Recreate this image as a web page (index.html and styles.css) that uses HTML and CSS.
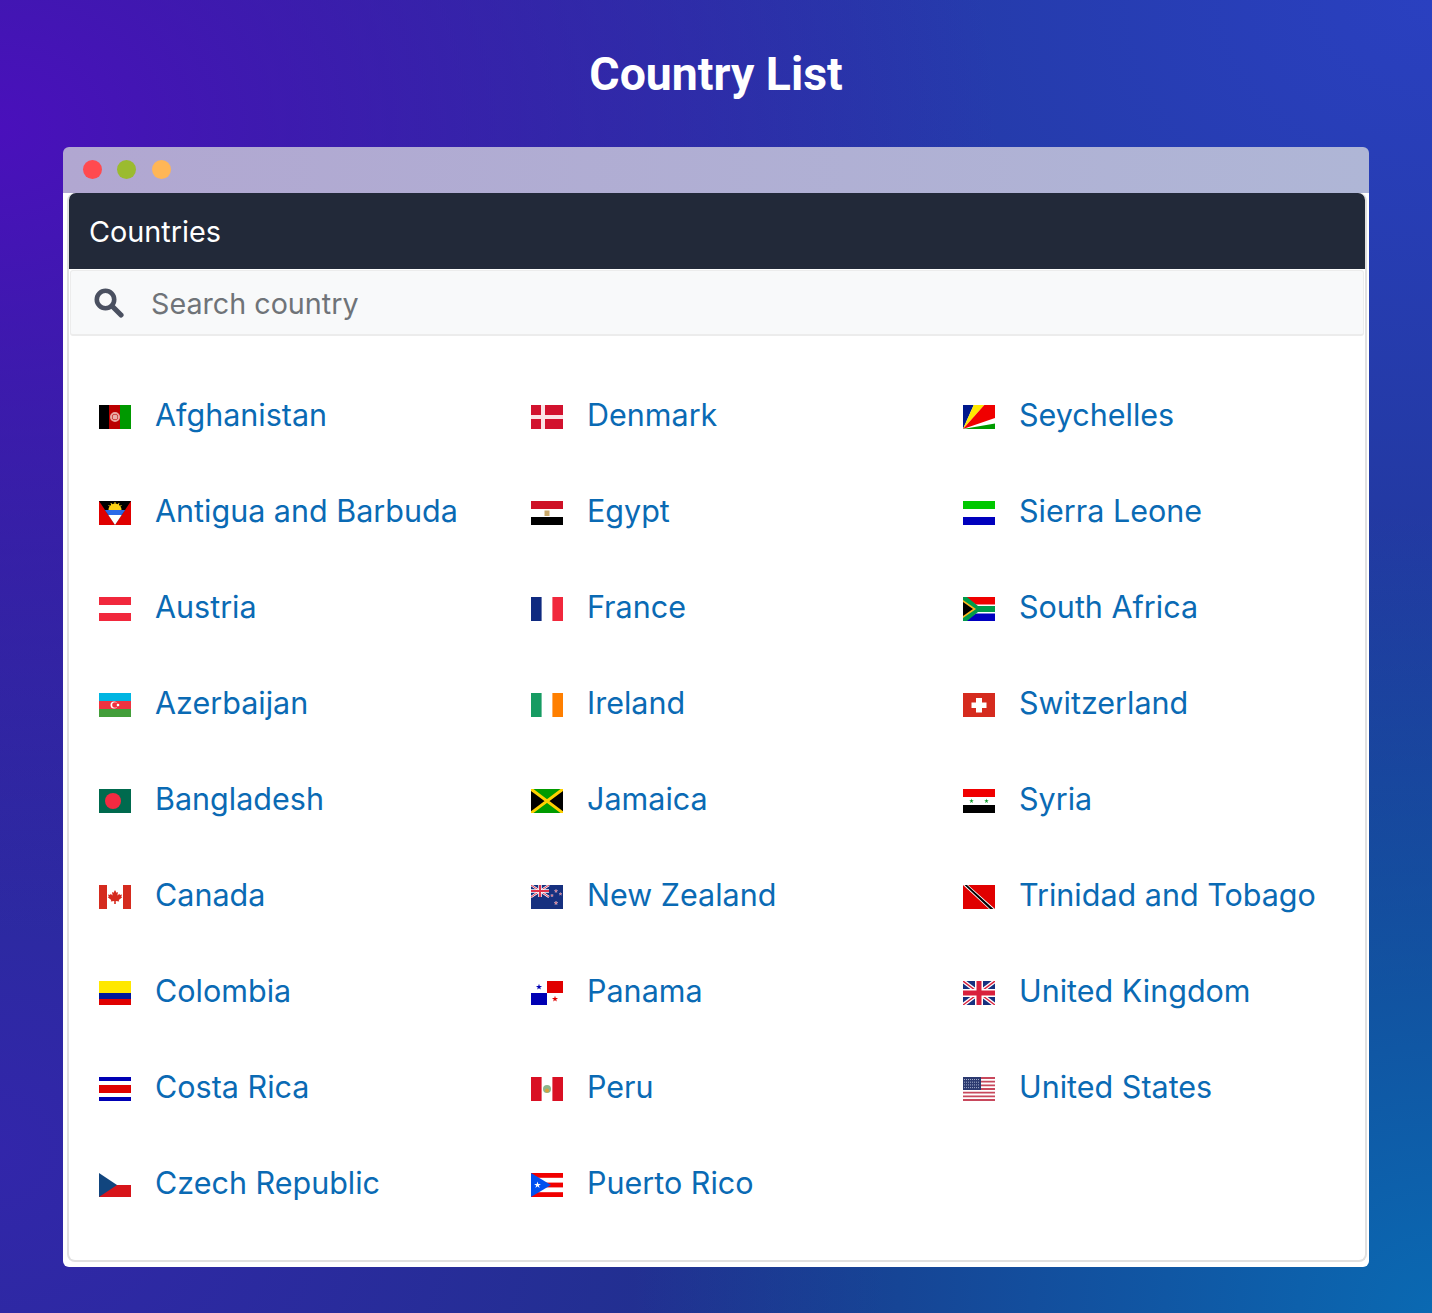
FILE: index.html
```html
<!DOCTYPE html>
<html lang="en">
<head>
<meta charset="utf-8">
<title>Country List</title>
<link rel="stylesheet" href="styles.css">
</head>
<body>
<svg class="defs" aria-hidden="true">
  <defs>
    <polygon id="star" points="0,-1 .225,-.31 .95,-.31 .36,.12 .59,.81 0,.38 -.59,.81 -.36,.12 -.95,-.31 -.225,-.31"/>
    <symbol id="af" viewBox="0 0 32 24"><rect width="10" height="24"/><rect x="10" width="11" height="24" fill="#b00"/><rect x="21" width="11" height="24" fill="#090"/><circle cx="16" cy="12" r="4" fill="none" stroke="#e9a8a0" stroke-width="2"/><circle cx="16" cy="12" r="2.500" fill="#e8b0aa"/></symbol>
    <symbol id="ag" viewBox="0 0 32 24"><rect width="32" height="24" fill="#e00000"/><polygon points="0,0 32,0 16,24"/><polygon points="5.800,9 26.200,9 22.700,14 9.300,14" fill="#2a6ae8"/><polygon points="9.300,14 22.700,14 16,24" fill="#fff"/><path d="M9.500 9a6.500 6.500 0 0 1 13 0z" fill="#fcd116"/><path d="M16 1v3M12 2l1 3M20 2l-1 3M9.500 4l2 2M22.500 4l-2 2" stroke="#fcd116" stroke-width="1"/></symbol>
    <symbol id="at" viewBox="0 0 32 24"><rect width="32" height="24" fill="#fff"/><rect width="32" height="8" fill="#f1283c"/><rect y="16" width="32" height="8" fill="#f1283c"/></symbol>
    <symbol id="az" viewBox="0 0 32 24"><rect width="32" height="8" fill="#00b5e2"/><rect y="8" width="32" height="8" fill="#ef3340"/><rect y="16" width="32" height="8" fill="#439e3a"/><circle cx="15" cy="12" r="3.500" fill="#fff"/><circle cx="16" cy="12" r="2.800" fill="#ef3340"/><circle cx="19" cy="12" r="1.300" fill="#fff"/></symbol>
    <symbol id="bd" viewBox="0 0 32 24"><rect width="32" height="24" fill="#006a4e"/><circle cx="14" cy="12" r="8" fill="#f42a41"/></symbol>
    <symbol id="ca" viewBox="0 0 32 24"><rect width="32" height="24" fill="#fff"/><rect width="8" height="24" fill="#d52b1e"/><rect x="24" width="8" height="24" fill="#d52b1e"/><path d="M16 5l1.500 2.800 1.500-.8-.6 3.500 2-1.800.5 1.300 2.100-.4-.7 2.200.9.500-3.400 2.800.4 1.300-3.400-.5v3h-1.600v-3l-3.400.5.400-1.300-3.400-2.800.9-.5-.7-2.200 2.100.4.500-1.300 2 1.800L13 7l1.500.8z" fill="#d52b1e"/></symbol>
    <symbol id="co" viewBox="0 0 32 24"><rect width="32" height="12" fill="#ffe800"/><rect y="12" width="32" height="6" fill="#00189b"/><rect y="18" width="32" height="6" fill="#e00000"/></symbol>
    <symbol id="cr" viewBox="0 0 32 24"><rect width="32" height="24" fill="#fff"/><rect width="32" height="4" fill="#0000b4"/><rect y="8" width="32" height="8" fill="#e00000"/><rect y="20" width="32" height="4" fill="#0000b4"/></symbol>
    <symbol id="cz" viewBox="0 0 32 24"><rect width="32" height="12" fill="#fff"/><rect y="12" width="32" height="12" fill="#d7141a"/><polygon points="0,0 18,12 0,24" fill="#11457e"/></symbol>
    <symbol id="dk" viewBox="0 0 32 24"><rect width="32" height="24" fill="#d2122e"/><rect x="10" width="4" height="24" fill="#fbe3e6"/><rect y="10" width="32" height="4" fill="#fbe3e6"/></symbol>
    <symbol id="eg" viewBox="0 0 32 24"><rect width="32" height="8" fill="#ce1126"/><rect y="8" width="32" height="8" fill="#fff"/><rect y="16" width="32" height="8"/><rect x="13.500" y="9.500" width="5" height="5.500" fill="#c9a86a"/></symbol>
    <symbol id="fr" viewBox="0 0 32 24"><rect width="32" height="24" fill="#fff"/><rect width="10.600" height="24" fill="#0f2a80"/><rect x="21.400" width="10.600" height="24" fill="#f1283c"/></symbol>
    <symbol id="ie" viewBox="0 0 32 24"><rect width="32" height="24" fill="#fff"/><rect width="10.600" height="24" fill="#169b62"/><rect x="21.400" width="10.600" height="24" fill="#ff7f00"/></symbol>
    <symbol id="jm" viewBox="0 0 32 24"><rect width="32" height="24" fill="#009b00"/><polygon points="0,0 16,12 0,24"/><polygon points="32,0 16,12 32,24"/><path d="M0 0l32 24M32 0L0 24" stroke="#fed100" stroke-width="3"/></symbol>
    <symbol id="nz" viewBox="0 0 32 24"><rect width="32" height="24" fill="#16307f"/><path d="M0 0l18 12M18 0L0 12" stroke="#fff" stroke-width="2.200"/><path d="M0 0l18 12M18 0L0 12" stroke="#e0334c" stroke-width="1"/><path d="M9 0v12M0 6h18" stroke="#fff" stroke-width="3.500"/><path d="M9 0v12M0 6h18" stroke="#e0334c" stroke-width="2"/><use href="#star" transform="translate(25,6) scale(1.700)" fill="#f04058" stroke="#fff" stroke-width=".2"/><use href="#star" transform="translate(21,10.500) scale(1.500)" fill="#f04058" stroke="#fff" stroke-width=".2"/><use href="#star" transform="translate(29.500,9) scale(1.500)" fill="#f04058" stroke="#fff" stroke-width=".2"/><use href="#star" transform="translate(25,18) scale(1.900)" fill="#f04058" stroke="#fff" stroke-width=".2"/></symbol>
    <symbol id="pa" viewBox="0 0 32 24"><rect width="32" height="24" fill="#fff"/><rect x="16" width="16" height="12" fill="#e00000"/><rect y="12" width="16" height="12" fill="#0000b4"/><use href="#star" transform="translate(8,6) scale(3.200)" fill="#0000b4"/><use href="#star" transform="translate(24,18) scale(3.200)" fill="#e00000"/></symbol>
    <symbol id="pe" viewBox="0 0 32 24"><rect width="32" height="24" fill="#fff"/><rect width="10.600" height="24" fill="#d91023"/><rect x="21.400" width="10.600" height="24" fill="#d91023"/><circle cx="16" cy="12" r="4" fill="#8db58c"/><circle cx="16" cy="13.500" r="2" fill="#d6a43a"/></symbol>
    <symbol id="pr" viewBox="0 0 32 24"><rect width="32" height="24" fill="#fff"/><rect width="32" height="4.800" fill="#f00000"/><rect y="9.600" width="32" height="4.800" fill="#f00000"/><rect y="19.200" width="32" height="4.800" fill="#f00000"/><polygon points="0,0 20,12 0,24" fill="#0050f0"/><use href="#star" transform="translate(6.500,12) scale(3.600)" fill="#fff"/></symbol>
    <symbol id="sc" viewBox="0 0 32 24"><rect width="32" height="24" fill="#fff"/><polygon points="0,24 0,0 10.700,0" fill="#00188c"/><polygon points="0,24 10.700,0 21.300,0" fill="#ffe800"/><polygon points="0,24 21.300,0 32,0 32,13" fill="#f00000"/><polygon points="0,24 32,18.500 32,24" fill="#009b00"/></symbol>
    <symbol id="sl" viewBox="0 0 32 24"><rect width="32" height="8" fill="#00c800"/><rect y="8" width="32" height="8" fill="#fff"/><rect y="16" width="32" height="8" fill="#0000bd"/></symbol>
    <symbol id="za" viewBox="0 0 32 24"><rect width="32" height="12" fill="#f00000"/><rect y="12" width="32" height="12" fill="#0000c0"/><polygon points="0,0 13,7.500 32,7.500 32,16.500 13,16.500 0,24" fill="#fff"/><polygon points="0,0 4,0 15,9 32,9 32,15 15,15 4,24 0,24" fill="#009b4a"/><polygon points="0,3 13,12 0,21" fill="#ffb81c"/><polygon points="0,5 10,12 0,19"/></symbol>
    <symbol id="ch" viewBox="0 0 32 24"><rect width="32" height="24" fill="#d52b1e"/><rect x="13" y="5" width="6" height="14.500" fill="#fff"/><rect x="8.500" y="9.500" width="15" height="5.500" fill="#fff"/></symbol>
    <symbol id="sy" viewBox="0 0 32 24"><rect width="32" height="8" fill="#f00000"/><rect y="8" width="32" height="8" fill="#fff"/><rect y="16" width="32" height="8"/><use href="#star" transform="translate(8.500,12) scale(2.400)" fill="#0c9b28"/><use href="#star" transform="translate(23.500,12) scale(2.400)" fill="#0c9b28"/></symbol>
    <symbol id="tt" viewBox="0 0 32 24"><rect width="32" height="24" fill="#e00000"/><polygon points="0,0 5,0 32,24 26,24" fill="#fff"/><polygon points="1.500,0 4,0 30.500,24 27,24" fill="#000"/></symbol>
    <symbol id="gb" viewBox="0 0 32 24"><rect width="32" height="24" fill="#16307f"/><path d="M0 0l32 24M32 0L0 24" stroke="#fff" stroke-width="4"/><path d="M0 0l32 24M32 0L0 24" stroke="#d9203c" stroke-width="1.400"/><path d="M16 0v24M0 12h32" stroke="#fff" stroke-width="8"/><path d="M16 0v24M0 12h32" stroke="#d9203c" stroke-width="5"/></symbol>
    <symbol id="us" viewBox="0 0 32 24"><rect width="32" height="24" fill="#fff"/><path d="M0 1h32M0 4.700h32M0 8.400h32M0 12h32M0 15.700h32M0 19.400h32M0 23h32" stroke="#c8485c" stroke-width="1.800"/><rect width="18" height="13" fill="#2c3a70"/><path d="M1 2.500h16M1 5.200h16M1 7.900h16M1 10.600h16" stroke="#a3adc9" stroke-width="1" stroke-dasharray="1 1"/></symbol>
  </defs>
</svg>

<h1 class="page-title">Country List</h1>

<main class="window">
  <div class="titlebar">
    <span class="dot dot-red"></span>
    <span class="dot dot-green"></span>
    <span class="dot dot-yellow"></span>
  </div>
  <div class="window-body">
    <section class="card">
      <header class="card-header">Countries</header>
      <div class="search">
        <svg class="search-icon" viewBox="0 0 30 30" aria-hidden="true"><circle cx="11.500" cy="11.500" r="8.700" fill="none" stroke="#4a5060" stroke-width="4.600"/><path d="M18.500 18.500L27 27" stroke="#4a5060" stroke-width="5.200" stroke-linecap="round"/></svg>
        <span class="search-text">Search country</span>
      </div>
      <div class="country-grid">
        <a class="country" href="#"><svg class="flag"><use href="#af"/></svg>Afghanistan</a>
        <a class="country" href="#"><svg class="flag"><use href="#dk"/></svg>Denmark</a>
        <a class="country" href="#"><svg class="flag"><use href="#sc"/></svg>Seychelles</a>
        <a class="country" href="#"><svg class="flag"><use href="#ag"/></svg>Antigua and Barbuda</a>
        <a class="country" href="#"><svg class="flag"><use href="#eg"/></svg>Egypt</a>
        <a class="country" href="#"><svg class="flag"><use href="#sl"/></svg>Sierra Leone</a>
        <a class="country" href="#"><svg class="flag"><use href="#at"/></svg>Austria</a>
        <a class="country" href="#"><svg class="flag"><use href="#fr"/></svg>France</a>
        <a class="country" href="#"><svg class="flag"><use href="#za"/></svg>South Africa</a>
        <a class="country" href="#"><svg class="flag"><use href="#az"/></svg>Azerbaijan</a>
        <a class="country" href="#"><svg class="flag"><use href="#ie"/></svg>Ireland</a>
        <a class="country" href="#"><svg class="flag"><use href="#ch"/></svg>Switzerland</a>
        <a class="country" href="#"><svg class="flag"><use href="#bd"/></svg>Bangladesh</a>
        <a class="country" href="#"><svg class="flag"><use href="#jm"/></svg>Jamaica</a>
        <a class="country" href="#"><svg class="flag"><use href="#sy"/></svg>Syria</a>
        <a class="country" href="#"><svg class="flag"><use href="#ca"/></svg>Canada</a>
        <a class="country" href="#"><svg class="flag"><use href="#nz"/></svg>New Zealand</a>
        <a class="country" href="#"><svg class="flag"><use href="#tt"/></svg>Trinidad and Tobago</a>
        <a class="country" href="#"><svg class="flag"><use href="#co"/></svg>Colombia</a>
        <a class="country" href="#"><svg class="flag"><use href="#pa"/></svg>Panama</a>
        <a class="country" href="#"><svg class="flag"><use href="#gb"/></svg>United Kingdom</a>
        <a class="country" href="#"><svg class="flag"><use href="#cr"/></svg>Costa Rica</a>
        <a class="country" href="#"><svg class="flag"><use href="#pe"/></svg>Peru</a>
        <a class="country" href="#"><svg class="flag"><use href="#us"/></svg>United States</a>
        <a class="country" href="#"><svg class="flag"><use href="#cz"/></svg>Czech Republic</a>
        <a class="country" href="#"><svg class="flag"><use href="#pr"/></svg>Puerto Rico</a>
      </div>
    </section>
  </div>
</main>
</body>
</html>
```

FILE: styles.css
```css
* { box-sizing: border-box; }

html, body { height: 100%; }

body {
  margin: 0;
  padding: 0 63px;
  overflow: hidden;
  font-family: Inter, "Liberation Sans", sans-serif;
  background:
    radial-gradient(ellipse 1000px 800px at 0 130px, rgba(76, 14, 190, .95), rgba(76, 14, 190, 0)),
    radial-gradient(ellipse 800px 800px at 100% 1313px, rgba(10, 105, 178, 1), rgba(10, 105, 178, 0)),
    radial-gradient(ellipse 1300px 1000px at 100% 0, rgba(42, 64, 192, 1), rgba(42, 64, 192, 0)),
    radial-gradient(ellipse 900px 900px at 0 1150px, rgba(50, 38, 170, 1), rgba(50, 38, 170, 0)),
    #1c3388;
}

.defs {
  position: absolute;
  width: 0;
  height: 0;
}

.page-title {
  margin: 0;
  height: 147px;
  padding-top: 45px;
  color: #fff;
  font-family: Roboto, sans-serif;
  font-size: 46.400px;
  font-weight: 700;
  line-height: 58px;
  text-align: center;
}

.window {
  height: 1120px;
  border-radius: 6px;
  overflow: hidden;
  display: flex;
  flex-direction: column;
}

.titlebar {
  flex: 0 0 46px;
  display: flex;
  align-items: center;
  gap: 15.500px;
  padding: 0 0 1px 19.500px;
  background: linear-gradient(90deg, #b1a7d1, #afb6d6);
}

.dot {
  width: 19px;
  height: 19px;
  border-radius: 50%;
}

.dot-red { background: #ff4a4f; }
.dot-green { background: #9bbb2f; }
.dot-yellow { background: #ffb656; }

.window-body {
  flex: 1;
  min-height: 0;
  background: #fff;
  padding: 0 2px 5px 4px;
  display: flex;
}

.card {
  flex: 1;
  min-width: 0;
  border: 2px solid #e0e0e0;
  border-top: 0;
  border-radius: 8px;
  display: flex;
  flex-direction: column;
}

.card-header {
  height: 76px;
  padding-left: 20px;
  display: flex;
  align-items: center;
  background: #222939;
  color: #fff;
  border-radius: 7px 7px 0 0;
  font-size: 28.800px;
}

.search {
  height: 66px;
  margin: 1px 1px 0;
  padding-left: 23px;
  display: flex;
  align-items: center;
  gap: 27px;
  background: #f8f9fa;
  border: 1px solid #ececec;
  border-bottom-width: 2px;
  border-radius: 3px;
}

.search-icon {
  width: 30px;
  height: 30px;
  flex: none;
}

.search-text {
  color: #6f7378;
  font-size: 28.700px;
  padding-top: 2px;
}

.country-grid {
  display: grid;
  grid-template-columns: repeat(3, 432px);
  grid-auto-rows: 96px;
  padding: 31px 0 0 30px;
}

.country {
  display: flex;
  align-items: center;
  gap: 25px;
  padding-bottom: 2px;
  color: #0a6ab4;
  font-size: 30.500px;
  text-decoration: none;
  white-space: nowrap;
}

.flag {
  width: 32px;
  height: 24px;
  flex: none;
  margin: 6px -1px 0 0;
}
```
